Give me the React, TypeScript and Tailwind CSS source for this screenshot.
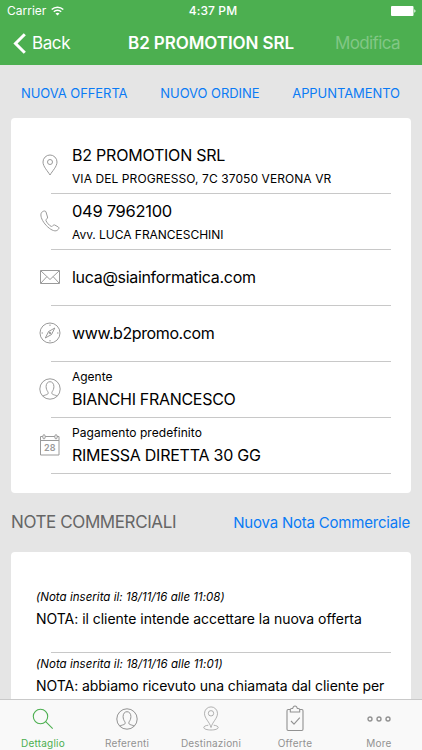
import type { ReactNode } from 'react';

const PersonIcon = ({ size }: { size: number }) => (
  <svg width={size} height={size} viewBox="0 0 22 22" fill="none" stroke="currentColor" strokeWidth="1">
    <circle cx="11" cy="11" r="10.2" />
    <path d="M3.800 18.100c1.600-1 4.100-1.300 4.900-2 .7-.7.500-1.800.1-2.400-1-1.400-1.700-3.200-1.700-5.100 0-2.700 1.400-4.900 3.900-4.900s3.900 2.200 3.900 4.900c0 1.900-.7 3.700-1.700 5.100-.4.600-.6 1.700.1 2.400.8.700 3.300 1 4.900 2" />
  </svg>
);

const PinIcon = () => (
  <svg width="16" height="22" viewBox="0 0 16 22" fill="none" stroke="currentColor" strokeWidth="1">
    <path d="M8 21C5.800 17.200 1 12.600 1 8a7 7 0 0 1 14 0c0 4.600-4.800 9.200-7 13z" />
    <circle cx="8" cy="8" r="2.500" />
  </svg>
);

const PhoneIcon = () => (
  <svg width="20" height="22" viewBox="0 0 20 22" fill="none" stroke="currentColor" strokeWidth="1" strokeLinejoin="round">
    <path d="M1.300 2.900C.2 5.100 1.300 9.400 4.900 13.900c3.700 4.600 8.100 7.300 11 6.900 1.200-.2 2.400-1.200 2.900-2.200.3-.7.100-1.200-.5-1.600l-3.400-1.900c-.7-.4-1.300-.2-1.800.4-.6.700-1.300 1.200-2.100.8-1.900-1-4.200-3.700-5-5.600-.3-.8.200-1.400.9-1.900.7-.4.9-1 .6-1.800L6 2C5.700 1.200 5.100.9 4.400 1c-1.200.1-2.500.9-3.100 1.900z" />
  </svg>
);

const MailIcon = () => (
  <svg width="20" height="14" viewBox="0 0 20 14" fill="none" stroke="currentColor" strokeWidth="1">
    <path d="M.5.5h19v13H.5zM.8.800 10 9.500 19.200.8M.8 13.200l6-6.500M19.200 13.200l-6-6.500" />
  </svg>
);

const CompassIcon = () => (
  <svg width="22" height="22" viewBox="0 0 22 22" fill="none" stroke="currentColor" strokeWidth="1" strokeLinejoin="round">
    <circle cx="11" cy="11" r="10" />
    <path d="m15.800 6-3.300 6.500L6.300 16l3.300-6.500zM9.600 9.500l2.900 3M11 2.500v1.500M11 18v1.500M2.500 11H4M18 11h1.500" />
    <circle cx="11" cy="11" r=".8" />
  </svg>
);

const CalendarIcon = () => (
  <svg width="20" height="22" viewBox="0 0 20 22" fill="none" stroke="currentColor" strokeWidth="1">
    <path d="M2.800 2.500H.500v18.500h18.500V2.500h-2M5.200 2.500h9.600M.5 6.500h18.500" />
    <ellipse cx="4" cy="2.800" rx="1.200" ry="2.200" />
    <ellipse cx="16" cy="2.800" rx="1.200" ry="2.200" />
    <text x="9.800" y="17" textAnchor="middle" fontSize="9" fontWeight="600" fill="currentColor" stroke="none">28</text>
  </svg>
);

const SearchIcon = () => (
  <svg width="22" height="22" viewBox="0 0 22 22" fill="none" stroke="currentColor" strokeWidth="1.100">
    <circle cx="8.500" cy="8.500" r="7.200" />
    <path d="m13.700 13.700 7 7" />
  </svg>
);

const MapPinIcon = () => (
  <svg width="16" height="25" viewBox="0 0 16 25" fill="none" stroke="currentColor" strokeWidth=".7">
    <path d="M8 21.500C6.800 16.200 1.500 12.500 1.500 7.400a6.500 6.500 0 0 1 13 0c0 5.100-5.300 8.800-6.500 14.100z" />
    <circle cx="8" cy="7.300" r="2.700" />
    <path d="M5.300 19.200c-2.500.3-4.500 1.100-4.500 2.300 0 1.500 3.200 2.500 7.200 2.500s7.200-1 7.200-2.500c0-1.200-2-2-4.500-2.300" />
  </svg>
);

const ClipboardIcon = () => (
  <svg width="18" height="27" viewBox="0 0 18 27" fill="none" stroke="currentColor" strokeWidth="1.100" strokeLinejoin="round">
    <path d="M4 4.500H2.200C1.400 4.500 1 5 1 5.700v18.600c0 .8.400 1.200 1.200 1.200h13.600c.8 0 1.200-.4 1.200-1.200V5.700c0-.7-.4-1.200-1.200-1.200H14" />
    <path d="M4.300 7V4.800c0-.9.600-1.300 1.400-1.300h1C7 2 7.700 1 9 1s2 1 2.300 2.500h1c.8 0 1.400.4 1.400 1.300V7z" />
    <path d="m5 16 3 3.200 5.800-6.500" />
  </svg>
);

const MoreIcon = () => (
  <svg width="24" height="6" viewBox="0 0 24 6" fill="none" stroke="currentColor" strokeWidth="1.400">
    <circle cx="3" cy="3" r="2" />
    <circle cx="12" cy="3" r="2" />
    <circle cx="21" cy="3" r="2" />
  </svg>
);

function Row({ icon, children }: { icon: ReactNode; children: ReactNode }) {
  return (
    <div className="flex h-14">
      <div className="flex w-[22px] shrink-0 items-center justify-center pb-[2px] text-[#9a9a9a]">{icon}</div>
      <div className="-ml-[10px] flex flex-1 flex-col border-b border-[#c8c8c8] pl-[21px]">{children}</div>
    </div>
  );
}

function Tab({ icon, label, className }: { icon: ReactNode; label: string; className: string }) {
  return (
    <div className={`flex flex-1 flex-col items-center ${className}`}>
      <div className="flex h-[37px] items-center">{icon}</div>
      <div className="text-[10px] leading-3 tracking-[0.2px]">{label}</div>
    </div>
  );
}

export default function App() {
  return (
    <div className="flex h-[750px] w-[422px] flex-col overflow-hidden bg-[#e5e5e5] font-['Inter','Liberation_Sans',sans-serif] whitespace-nowrap text-black">
      <header className="h-[65px] shrink-0 bg-[#4caf50] text-white">
        <div className="grid h-[22px] grid-cols-3 items-center pl-[7px] pr-[6px] text-[12px]">
          <div className="flex items-center gap-[5px]">
            <span>Carrier</span>
            <svg width="13" height="10" viewBox="0 0 13 10" fill="none" stroke="white" strokeWidth="1.500">
              <path d="M.7 3.500a8.300 8.300 0 0 1 11.600 0M2.800 5.800a5.300 5.300 0 0 1 7.400 0" />
              <path d="M4.500 7.600a2.900 2.900 0 0 1 4 0l-2 2z" fill="white" stroke="none" />
            </svg>
          </div>
          <span className="pl-[3px] text-center font-medium tracking-[0.1px]">4:37 PM</span>
          <svg className="justify-self-end" width="25" height="10" viewBox="0 0 25 10" fill="white">
            <rect width="22.500" height="10" rx="1" />
            <path d="M23.300 3.300c1.600.5 1.600 2.900 0 3.400z" />
          </svg>
        </div>
        <div className="flex h-[43px] items-center pl-[13px] pr-[22px]">
          <div className="flex w-[115px] items-center gap-[6px]">
            <svg width="13" height="21" viewBox="0 0 13 21" fill="none" stroke="white" strokeWidth="3">
              <path d="M11.800 1.200 2.500 10.500l9.300 9.300" />
            </svg>
            <span className="text-[17px] tracking-[-0.4px]">Back</span>
          </div>
          <h1 className="text-[17px] font-semibold tracking-[-0.08px]">B2 PROMOTION SRL</h1>
          <span className="ml-auto text-[17px] tracking-[-0.6px] text-[#82c785]">Modifica</span>
        </div>
      </header>

      <nav className="flex h-[53px] shrink-0 items-center justify-between pl-[21px] pr-[22px] pt-[5px] text-[13px] tracking-[-0.07px] text-[#0a7bf5]">
        <span>NUOVA OFFERTA</span>
        <span>NUOVO ORDINE</span>
        <span>APPUNTAMENTO</span>
      </nav>

      <section className="mx-[11px] h-[375px] shrink-0 rounded-[4px] bg-white pl-[28px] pr-[20px] pt-[20px]">
        <Row icon={<PinIcon />}>
          <p className="pt-[6px] text-[16px] leading-[22px] tracking-[-0.22px]">B2 PROMOTION SRL</p>
          <p className="pt-[5px] text-[12px] leading-4 tracking-[0.08px]">VIA DEL PROGRESSO, 7C 37050 VERONA VR</p>
        </Row>
        <Row icon={<PhoneIcon />}>
          <p className="pt-[6px] text-[16.500px] leading-[22px] tracking-[-0.3px]">049 7962100</p>
          <p className="pt-[5px] text-[12px] leading-4 tracking-[-0.03px]">Avv. LUCA FRANCESCHINI</p>
        </Row>
        <Row icon={<MailIcon />}>
          <p className="pt-[16px] text-[16px] leading-[22px] tracking-[-0.31px]">luca@siainformatica.com</p>
        </Row>
        <Row icon={<CompassIcon />}>
          <p className="pt-[16px] text-[16px] leading-[22px] tracking-[-0.4px]">www.b2promo.com</p>
        </Row>
        <Row icon={<PersonIcon size={22} />}>
          <p className="pt-[7px] text-[12px] leading-4 tracking-[-0.02px]">Agente</p>
          <p className="pt-[3px] text-[16px] leading-[22px] tracking-[-0.3px]">BIANCHI FRANCESCO</p>
        </Row>
        <Row icon={<CalendarIcon />}>
          <p className="pt-[7px] text-[12px] leading-4 tracking-[0.05px]">Pagamento predefinito</p>
          <p className="pt-[3px] text-[16px] leading-[22px] tracking-[-0.24px]">RIMESSA DIRETTA 30 GG</p>
        </Row>
      </section>

      <div className="flex h-[59px] shrink-0 items-center justify-between pl-[11px] pr-[12px]">
        <h2 className="text-[17px] tracking-[-0.4px] text-[#666]">NOTE COMMERCIALI</h2>
        <span className="pt-px text-[15px] tracking-[-0.2px] text-[#0a7bf5]">Nuova Nota Commerciale</span>
      </div>

      <section className="mx-[11px] h-[147px] shrink-0 overflow-hidden rounded-t-[4px] bg-white pl-[25px] pr-[20px] pt-[37px]">
        <p className="text-[11.500px] italic leading-4 tracking-[0.03px]">(Nota inserita il: 18/11/16 alle 11:08)</p>
        <p className="pt-[4px] text-[14px] leading-[20px] tracking-[-0.03px]">NOTA: il cliente intende accettare la nuova offerta</p>
        <div className="mt-[23px] ml-[15px] h-px bg-[#c8c8c8]" />
        <p className="pt-[3px] text-[11.500px] italic leading-4 tracking-[0.04px]">(Nota inserita il: 18/11/16 alle 11:01)</p>
        <p className="pt-[4px] text-[14px] leading-[20px] tracking-[-0.05px]">NOTA: abbiamo ricevuto una chiamata dal cliente per</p>
      </section>

      <footer className="flex h-[51px] shrink-0 border-t border-[#c9c9c9] bg-[#f9f9f9] pl-px pr-px text-[#929292]">
        <Tab icon={<SearchIcon />} label="Dettaglio" className="text-[#4caf50]" />
        <Tab icon={<PersonIcon size={22} />} label="Referenti" className="" />
        <Tab icon={<MapPinIcon />} label="Destinazioni" className="" />
        <Tab icon={<ClipboardIcon />} label="Offerte" className="" />
        <Tab icon={<MoreIcon />} label="More" className="" />
      </footer>
    </div>
  );
}
